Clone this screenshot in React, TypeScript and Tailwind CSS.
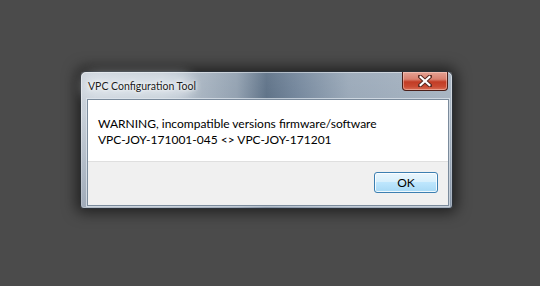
import React from "react";

export default function App() {
  return (
    <div className="w-[540px] h-[286px] bg-[#4b4b4b] overflow-hidden pt-[71px] pl-[80px]" style={{ fontFamily: "Lato, 'Noto Sans', sans-serif" }}>
      <div className="relative w-[373px] h-[138px] rounded-t-[6px] rounded-b-[4px] border border-[#2b3138] shadow-[0_0_14px_4px_rgba(0,0,0,0.55)] bg-[linear-gradient(to_right,#c8d0d9_0%,#bec8d2_22%,#909faf_42%,#5b6f85_50%,#71849a_58%,#98a7b7_72%,#a6b3c1_100%)] flex flex-col">
        <div className="absolute inset-0 rounded-t-[5px] rounded-b-[3px] border border-[rgba(255,255,255,0.45)] pointer-events-none" />
        <div className="absolute inset-0 rounded-b-[3px] bg-[linear-gradient(to_bottom,rgba(255,255,255,0.08)_0%,rgba(255,255,255,0)_30%,rgba(40,60,90,0.25)_100%)] pointer-events-none" />
        {/* title bar */}
        <div className="relative h-[28px] flex items-start pl-[7px] pt-[7px]">
          <div className="absolute left-[2px] top-[2px] w-[110px] h-[24px] rounded-full bg-[rgba(235,240,245,0.55)] blur-[6px]" />
          <span className="relative text-[10.5px] leading-[14px] text-[#1b1b1b] [text-shadow:0_0_6px_#ffffff,0_0_3px_#ffffff]">VPC Configuration Tool</span>
          {/* close button */}
          <div className="absolute right-[4px] top-0 w-[46px] h-[19px] rounded-b-[4px] border border-t-0 border-[#4a1e18] bg-[linear-gradient(to_bottom,#e4a294_0%,#d9806f_40%,#c23c25_55%,#c94a32_80%,#d96e55_100%)] shadow-[inset_0_0_0_1px_rgba(255,220,210,0.45)] flex items-center justify-center">
            <svg width="14" height="12" viewBox="0 0 14 12">
              <path d="M2 1.5 L12 10.5 M12 1.5 L2 10.5" stroke="#5a2a22" strokeWidth="4.2" strokeLinecap="square" />
              <path d="M2.6 2 L11.4 10 M11.4 2 L2.6 10" stroke="#ffffff" strokeWidth="2.2" strokeLinecap="square" />
            </svg>
          </div>
        </div>
        {/* client */}
        <div className="relative ml-[6px] w-[360px] h-[105px] border border-[#7b8b9c] shadow-[0_0_0_1px_rgba(225,232,240,0.7)] flex flex-col box-content -mt-[1px]">
          <div className="h-[61px] bg-white pl-[10px] pt-[16px] text-[12px] leading-[16px] text-black">
            <div>WARNING, incompatible versions firmware/software</div>
            <div>VPC-JOY-171001-045 &lt;&gt; VPC-JOY-171201</div>
          </div>
          <div className="flex-1 bg-[#f0f0f0] border-t border-[#dfdfdf] flex justify-end items-start pt-[10px] pr-[10px]">
            <div className="w-[64px] h-[21px] rounded-[3px] border border-[#3c7fb1] shadow-[inset_0_0_0_1px_rgba(255,255,255,0.8)] bg-[linear-gradient(to_bottom,#eaf6fd_0%,#d9f0fc_45%,#bee6fd_50%,#a7d9f5_100%)] flex items-center justify-center text-[12px] text-black">
              OK
            </div>
          </div>
        </div>
      </div>
    </div>
  );
}
